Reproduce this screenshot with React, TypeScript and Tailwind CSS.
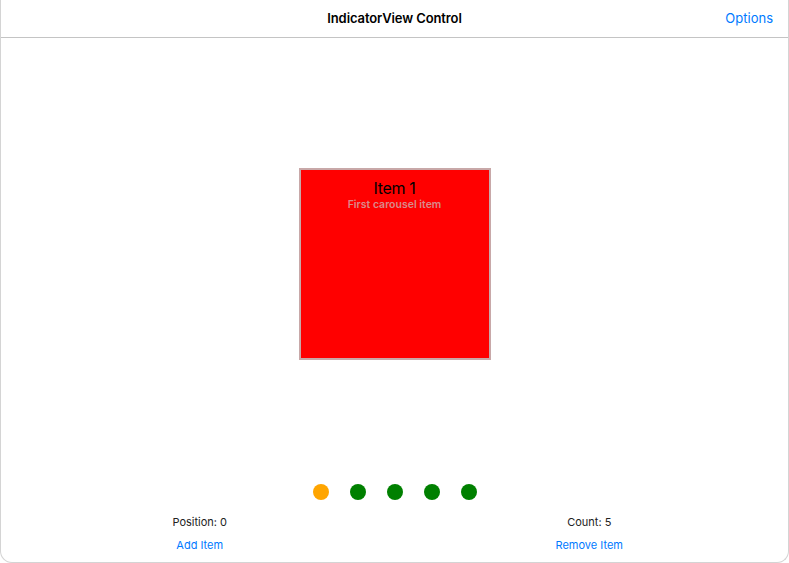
export default function App() {
  const dots = ["bg-[#ffa500]", "bg-[#008000]", "bg-[#008000]", "bg-[#008000]", "bg-[#008000]"];
  return (
    <div
      className="w-full h-[563px] flex flex-col bg-white rounded-b-[12px] border-x border-b border-[#d4d4d4] overflow-hidden"
      style={{ fontFamily: "Inter, 'Noto Sans', sans-serif" }}
    >
      <header className="relative h-[38px] shrink-0 border-b border-[#c4c4c4] flex items-center justify-center">
        <span className="text-[13px] font-semibold text-black tracking-[-0.1px]">IndicatorView Control</span>
        <button className="absolute right-[15px] top-[9px] text-[13px] leading-[18px] text-[#007aff]">Options</button>
      </header>

      <main className="flex-1 flex flex-col items-center">
        <div className="mt-[130px] w-[192px] h-[192px] bg-[#ff0000] border-2 border-[#c8a8a8] flex flex-col items-center pt-[8px]">
          <span className="text-[16px] leading-[20px] text-black tracking-[-0.3px]">Item 1</span>
          <span className="text-[10.5px] leading-[13px] font-semibold text-[#d98a8a]">First carousel item</span>
        </div>

        <div className="mt-[124px] flex gap-[21px]">
          {dots.map((c, i) => (
            <div key={i} className={`w-[16px] h-[16px] rounded-full ${c}`} />
          ))}
        </div>

        <div className="w-full grid grid-cols-2 mt-[15px]">
          <div className="flex flex-col items-center pl-[4px]">
            <span className="text-[11px] leading-[14px] text-[#222]">Position: 0</span>
            <button className="mt-[9px] text-[11px] leading-[14px] text-[#007aff]">Add Item</button>
          </div>
          <div className="flex flex-col items-center pr-[4px]">
            <span className="text-[11px] leading-[14px] text-[#222]">Count: 5</span>
            <button className="mt-[9px] text-[11px] leading-[14px] text-[#007aff]">Remove Item</button>
          </div>
        </div>
      </main>
    </div>
  );
}
